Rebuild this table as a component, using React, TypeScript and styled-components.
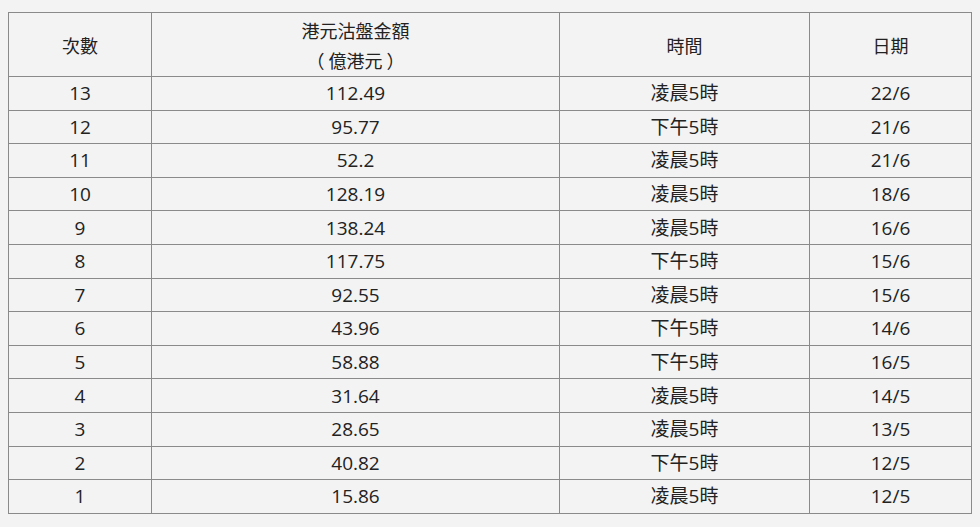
import styled, { createGlobalStyle } from 'styled-components';

const GlobalStyle = createGlobalStyle`
  html, body {
    background: #f3f3f3;
  }
  body {
    margin: 12px 8px 8px;
    font-family: "Open Sans", "Noto Sans CJK TC", sans-serif;
    color: #222;
  }
`;

const Table = styled.table`
  width: 964px;
  border-collapse: collapse;
  table-layout: fixed;
  background: #f3f3f3;
`;

const HeadCell = styled.th<{ $w?: number }>`
  ${(p) => (p.$w ? `width: ${p.$w}px;` : '')}
  height: 63px;
  border: 1px solid #8a8a8a;
  font-weight: normal;
  font-size: 18px;
  text-align: center;
  vertical-align: middle;
  line-height: 30px;
  padding: 0;
  font-family: "Noto Sans CJK TC", sans-serif;
`;

const Row = styled.tr`
  height: 33.6px;
`;

const Cell = styled.td`
  border: 1px solid #8a8a8a;
  text-align: center;
  vertical-align: middle;
  padding: 0;
  font-size: 19px;
  line-height: 32px;
  font-family: "Open Sans", "Noto Sans CJK TC", sans-serif;
`;

const rows: [string, string, string, string][] = [
  ['13', '112.49', '凌晨5時', '22/6'],
  ['12', '95.77', '下午5時', '21/6'],
  ['11', '52.2', '凌晨5時', '21/6'],
  ['10', '128.19', '凌晨5時', '18/6'],
  ['9', '138.24', '凌晨5時', '16/6'],
  ['8', '117.75', '下午5時', '15/6'],
  ['7', '92.55', '凌晨5時', '15/6'],
  ['6', '43.96', '下午5時', '14/6'],
  ['5', '58.88', '下午5時', '16/5'],
  ['4', '31.64', '凌晨5時', '14/5'],
  ['3', '28.65', '凌晨5時', '13/5'],
  ['2', '40.82', '下午5時', '12/5'],
  ['1', '15.86', '凌晨5時', '12/5'],
];

export default function App() {
  return (
    <>
      <GlobalStyle />
      <Table>
        <thead>
          <tr>
            <HeadCell $w={142}>次數</HeadCell>
            <HeadCell $w={407}>
              港元沽盤金額
              <br />（ 億港元 ）
            </HeadCell>
            <HeadCell $w={249}>時間</HeadCell>
            <HeadCell>日期</HeadCell>
          </tr>
        </thead>
        <tbody>
          {rows.map((r) => (
            <Row key={r[0]}>
              {r.map((v, i) => (
                <Cell key={i}>{v}</Cell>
              ))}
            </Row>
          ))}
        </tbody>
      </Table>
    </>
  );
}
